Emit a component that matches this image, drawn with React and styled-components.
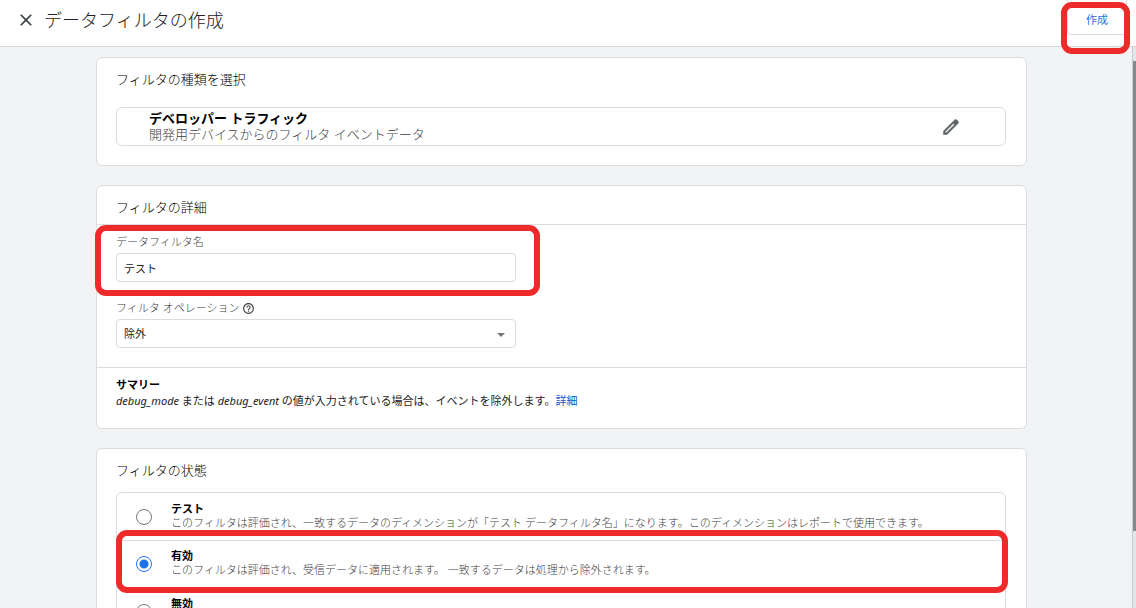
import React, { useState } from 'react';
import styled, { createGlobalStyle } from 'styled-components';
import { MdClose, MdHelpOutline } from 'react-icons/md';

const states = [
    {
        id: 'test',
        name: 'テスト',
        text: 'このフィルタは評価され、一致するデータのディメンションが「テスト データフィルタ名」になります。このディメンションはレポートで使用できます。',
    },
    {
        id: 'active',
        name: '有効',
        text: 'このフィルタは評価され、受信データに適用されます。 一致するデータは処理から除外されます。',
        marked: true,
    },
    {
        id: 'inactive',
        name: '無効',
    },
];

export default function App() {

    const [name, setName] = useState('テスト');
    const [operation, setOperation] = useState('exclude');
    const [state, setState] = useState('active');

    return (
        <Page>
            <GlobalStyle />
            <Header>
                <IconButton type="button" aria-label="閉じる"><MdClose size="20px" /></IconButton>
                <Title>データフィルタの作成</Title>
                <CreateBox>
                    <CreateButton type="button">作成</CreateButton>
                    <Marker $top={2} $right={-3} $bottom={-19} $left={-6} />
                </CreateBox>
            </Header>
            <Body>
                <Content>
                    <Card>
                        <CardTitle $space={19}>フィルタの種類を選択</CardTitle>
                        <TypeBox>
                            <div>
                                <TypeName>デベロッパー トラフィック</TypeName>
                                <TypeText>開発用デバイスからのフィルタ イベントデータ</TypeText>
                            </div>
                            <IconButton type="button" aria-label="編集"><PencilIcon /></IconButton>
                        </TypeBox>
                    </Card>

                    <Card>
                        <CardTitle $space={8}>フィルタの詳細</CardTitle>
                        <Fields>
                            <Field>
                                <Label htmlFor="filter-name">データフィルタ名</Label>
                                <Input id="filter-name" value={name} onChange={(e) => setName(e.target.value)} />
                                <Marker $top={-9} $right={-24} $bottom={-14} $left={-21} />
                            </Field>
                            <Field>
                                <Label htmlFor="filter-operation">フィルタ オペレーション<MdHelpOutline size="13px" /></Label>
                                <SelectBox>
                                    <Select id="filter-operation" value={operation} onChange={(e) => setOperation(e.target.value)}>
                                        <option value="exclude">除外</option>
                                        <option value="include">一致</option>
                                    </Select>
                                    <Arrow />
                                </SelectBox>
                            </Field>
                        </Fields>
                        <Summary>
                            <h3>サマリー</h3>
                            <p><em>debug_mode</em> または <em>debug_event</em> の値が入力されている場合は、イベントを除外します。<a href="#details">詳細</a></p>
                        </Summary>
                    </Card>

                    <Card>
                        <CardTitle $space={13}>フィルタの状態</CardTitle>
                        <Options>
                            {
                                states.map((item) => {
                                    return (
                                        <Option key={item.id}>
                                            <Radio
                                                type="radio"
                                                name="state"
                                                checked={state === item.id}
                                                onChange={() => setState(item.id)}
                                            />
                                            <OptionBody>
                                                <OptionName>{item.name}</OptionName>
                                                {item.text && <OptionText>{item.text}</OptionText>}
                                            </OptionBody>
                                            {item.marked && <Marker $top={-11} $right={-3} $bottom={-6} $left={-1} />}
                                        </Option>
                                    )
                                })
                            }
                        </Options>
                    </Card>
                </Content>
                <ScrollTrack>
                    <ScrollThumb />
                </ScrollTrack>
            </Body>
        </Page>
    )
}

function PencilIcon() {
    return (
        <svg width="20" height="20" viewBox="0 -960 960 960" fill="currentColor" stroke="currentColor" strokeWidth="24">
            <path d="M200-200h57l391-391-57-57-391 391v57Zm-80 80v-170l528-527q12-11 26.5-17t30.5-6q16 0 31 6t26 18l55 56q12 11 17.5 26t5.5 30q0 16-5.5 30.5T817-647L290-120H120Z" />
        </svg>
    )
}

const GlobalStyle = createGlobalStyle`
    * {
        box-sizing: border-box;
    }

    body {
        margin: 0;
        font-family: 'Noto Sans', 'Noto Sans CJK JP', sans-serif;
        font-weight: 300;
        color: #000;
    }

    button, input, select {
        font-family: inherit;
        font-weight: inherit;
    }

    h1, h2, h3, p {
        margin: 0;
    }
`;

const Page = styled.div`
    display: flex;
    flex-direction: column;
    height: 100vh;
    overflow: hidden;
`;

const Header = styled.header`
    display: flex;
    align-items: flex-start;
    flex: none;
    height: 47px;
    padding: 0 9px 0 16px;
    background: #fff;
    border-bottom: 1px solid #d5d6d8;
`;

const IconButton = styled.button`
    display: flex;
    padding: 0;
    border: none;
    background: none;
    color: #5f6368;

    ${Header} & {
        margin-top: 10px;
        color: #3c4043;
    }
`;

const Title = styled.h1`
    flex: 1;
    margin-left: 8px;
    font-size: 18px;
    line-height: 40px;
    font-weight: 300;
    color: #202124;
`;

const CreateBox = styled.div`
    position: relative;
    z-index: 1;
`;

const CreateButton = styled.button`
    display: block;
    width: 60px;
    height: 35px;
    padding: 4px 0 0;
    border: 1px solid #dadce0;
    border-top: none;
    border-radius: 0 0 4px 4px;
    background: #fff;
    font-size: 11px;
    font-weight: 400;
    color: #1a73e8;
`;

const Marker = styled.span`
    position: absolute;
    top: ${(props) => props.$top}px;
    right: ${(props) => props.$right}px;
    bottom: ${(props) => props.$bottom}px;
    left: ${(props) => props.$left}px;
    z-index: 1;
    border: 6px solid #ed2b2a;
    border-radius: 11px;
    pointer-events: none;
`;

const Body = styled.div`
    display: flex;
    flex: 1;
    min-height: 0;
    background: #f1f3f4;
`;

const Content = styled.main`
    display: flex;
    flex-direction: column;
    flex: 1;
    gap: 19px;
    padding: 10px 105px 0 96px;
    overflow: hidden;
`;

const Card = styled.section`
    flex: none;
    background: #fff;
    border: 1px solid #dadce0;
    border-radius: 6px;
`;

const CardTitle = styled.h2`
    padding: 12px 19px ${(props) => props.$space}px;
    font-size: 13px;
    line-height: 18px;
    font-weight: 300;
`;

const TypeBox = styled.div`
    display: flex;
    justify-content: space-between;
    align-items: flex-end;
    margin: 0 20px 19px 19px;
    padding: 2px 44px 3px 32px;
    border: 1px solid #dadce0;
    border-radius: 6px;

    & > button {
        margin-bottom: 5px;
    }
`;

const TypeName = styled.h3`
    font-size: 13px;
    line-height: 16px;
    font-weight: 700;
`;

const TypeText = styled.p`
    font-size: 13px;
    line-height: 16px;
    color: #3c4043;
`;

const Fields = styled.div`
    display: flex;
    flex-direction: column;
    gap: 18px;
    padding: 9px 19px 19px;
    border-top: 1px solid #dadce0;
    border-bottom: 1px solid #dadce0;
`;

const Field = styled.div`
    position: relative;
    width: 100%;
    max-width: 400px;
`;

const Label = styled.label`
    display: flex;
    align-items: center;
    gap: 3px;
    margin-bottom: 3px;
    font-size: 11px;
    line-height: 16px;
    color: #3c4043;
`;

const Input = styled.input`
    display: block;
    width: 100%;
    height: 29px;
    padding: 0 7px;
    border: 1px solid #dadce0;
    border-radius: 4px;
    background: #fff;
    font-size: 11px;
    font-weight: 400;
    color: #202124;
`;

const SelectBox = styled.div`
    position: relative;
`;

const Select = styled(Input).attrs({ as: 'select' })`
    appearance: none;
`;

const Arrow = styled.span`
    position: absolute;
    top: 14px;
    right: 11px;
    border: 4px solid transparent;
    border-top-color: #757575;
    border-bottom: none;
    pointer-events: none;
`;

const Summary = styled.div`
    padding: 9px 19px 19px;
    font-size: 11px;
    line-height: 16px;
    font-weight: 400;
    color: #202124;

    & > h3 {
        font-size: 11px;
        font-weight: 700;
        color: #000;
    }

    & a {
        color: #1155cc;
        text-decoration: none;
    }
`;

const Options = styled.div`
    margin: 0 20px 19px 19px;
    padding-top: 1px;
    border: 1px solid #dadce0;
    border-radius: 6px;
`;

const Option = styled.label`
    position: relative;
    display: flex;
    align-items: center;
    gap: 19px;
    height: 47px;
    padding-left: 19px;
    border-bottom: 1px solid #dadce0;

    &:last-child {
        border-bottom: none;
    }
`;

const Radio = styled.input`
    appearance: none;
    flex: none;
    width: 16px;
    height: 16px;
    margin: 0;
    border: 1px solid #757575;
    border-radius: 50%;
    background: #fff;

    &:checked {
        border-color: #1a73e8;
        background: radial-gradient(circle, #1a73e8 4px, #fff 5px);
    }
`;

const OptionBody = styled.span`
    display: flex;
    flex-direction: column;
    height: 30px;
    line-height: 14px;
`;

const OptionName = styled.span`
    font-size: 11px;
    font-weight: 700;
`;

const OptionText = styled.span`
    font-size: 11px;
    color: #3c4043;
`;

const ScrollTrack = styled.div`
    flex: none;
    width: 4px;
    padding-top: 14px;
    border-left: 1px solid #c9cbce;
    background: #e4e5e8;
`;

const ScrollThumb = styled.div`
    height: 86%;
    background: #87888a;
`;
